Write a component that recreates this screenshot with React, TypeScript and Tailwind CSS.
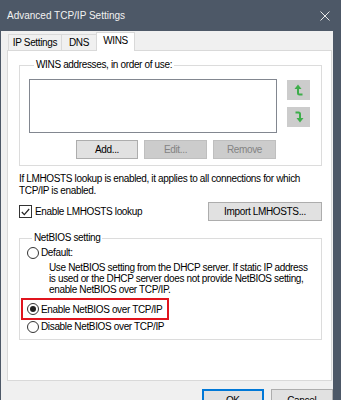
import React from "react";

const font = { fontFamily: '"Liberation Sans", Arial, sans-serif' };

const Radio = ({ checked }: { checked?: boolean }) => (
  <span className="w-[12px] h-[12px] rounded-full border border-[#333] bg-white flex items-center justify-center shrink-0">
    {checked && <span className="w-[6px] h-[6px] rounded-full bg-[#222]" />}
  </span>
);

const WinButton = ({
  children,
  disabled,
  className = "",
}: {
  children: React.ReactNode;
  disabled?: boolean;
  className?: string;
}) => (
  <div
    className={
      "h-[19px] flex items-center justify-center border text-[10px] tracking-[-0.35px] " +
      (disabled
        ? "bg-[#cccccc] border-[#bfbfbf] text-[#838383] "
        : "bg-[#e1e1e1] border-[#adadad] text-black ") +
      className
    }
  >
    {children}
  </div>
);

const UpIcon = () => (
  <svg width="10" height="12" viewBox="0 0 10 12">
    <polygon points="0.5,5 4,0.5 7.5,5" fill="#3dae4a" />
    <path d="M4 4.5 V9 Q4 10.5 5.5 10.5 H8.5" stroke="#3dae4a" strokeWidth="2" fill="none" />
  </svg>
);

const DownIcon = () => (
  <svg width="10" height="12" viewBox="0 0 10 12">
    <path d="M1.5 1.5 H4.5 Q6 1.5 6 3 V7.5" stroke="#3dae4a" strokeWidth="2" fill="none" />
    <polygon points="2.5,7 6,11.5 9.5,7" fill="#3dae4a" />
  </svg>
);

export default function App() {
  return (
    <div className="w-[341px] h-[400px] overflow-hidden bg-[#4d5867] flex flex-col whitespace-nowrap" style={font}>
      {/* title bar */}
      <div className="h-[31px] shrink-0 flex items-center justify-between pl-[7px] pr-[11px] text-[10px] text-[#f2f2f2]">
        <span>Advanced TCP/IP Settings</span>
        <svg width="10" height="10" viewBox="0 0 10 10">
          <path d="M0.5 0.5 L9.5 9.5 M9.5 0.5 L0.5 9.5" stroke="#e8e8e8" strokeWidth="1" />
        </svg>
      </div>

      <div className="ml-[1px] w-[332px] flex-1 bg-[#f0f0f0] flex flex-col text-[10px] tracking-[-0.35px] text-black">
        {/* tabs */}
        <div className="mt-[1px] ml-[7px] h-[18px] flex items-end">
          <div className="h-[16px] w-[54px] flex items-center justify-center border border-b-0 border-[#d9d9d9] bg-[#f0f0f0]">
            IP Settings
          </div>
          <div className="-ml-px h-[16px] w-[36px] flex items-center justify-center border border-b-0 border-[#d9d9d9] bg-[#f0f0f0]">
            DNS
          </div>
          <div className="-ml-px h-[19px] -mb-px relative z-10 w-[39px] pb-[3px] flex items-center justify-center border border-b-0 border-[#d9d9d9] bg-white">
            WINS
          </div>
        </div>

        {/* tab panel */}
        <div className="ml-[6px] w-[325px] h-[331px] border border-[#d9d9d9] bg-white px-[11px]">
          <fieldset className="mt-[8px] w-[303px] border border-[#dcdcdc] pl-[9px] pb-[6px]">
            <legend className="ml-[5px] px-[2px] leading-[12px]">WINS addresses, in order of use:</legend>
            <div className="mt-[8px] flex">
              <div className="w-[248px] h-[54px] border border-[#828790] bg-white" />
              <div className="ml-[10px] mt-[1px] flex flex-col gap-[7px]">
                <div className="w-[23px] h-[20px] bg-[#cccccc] flex items-center justify-center">
                  <UpIcon />
                </div>
                <div className="w-[23px] h-[20px] bg-[#cccccc] flex items-center justify-center">
                  <DownIcon />
                </div>
              </div>
            </div>
            <div className="mt-[7px] ml-[47px] flex gap-[6px]">
              <WinButton className="w-[62px]">Add...</WinButton>
              <WinButton disabled className="w-[63px]">
                Edit...
              </WinButton>
              <WinButton disabled className="w-[63px]">
                Remove
              </WinButton>
            </div>
          </fieldset>

          <p className="mt-[7px] leading-[12px]">
            If LMHOSTS lookup is enabled, it applies to all connections for which
            <br />
            TCP/IP is enabled.
          </p>

          <div className="mt-[5px] w-[303px] flex items-center justify-between">
            <div className="flex items-center gap-[3px]">
              <span className="w-[13px] h-[13px] border border-[#333] bg-white flex items-center justify-center">
                <svg width="9" height="8" viewBox="0 0 9 8">
                  <path d="M0.8 4 L3.3 6.6 L8.2 1" stroke="#222" strokeWidth="1.2" fill="none" />
                </svg>
              </span>
              <span>Enable LMHOSTS lookup</span>
            </div>
            <WinButton className="w-[114px]">Import LMHOSTS...</WinButton>
          </div>

          <fieldset className="mt-[11px] w-[303px] border border-[#dcdcdc] pl-[7px] pb-[6px]">
            <legend className="ml-[5px] px-[2px] leading-[12px]">NetBIOS setting</legend>
            <div className="mt-[3px] flex items-center gap-[2px] leading-[12px]">
              <Radio />
              <span>Default:</span>
            </div>
            <p className="mt-[3px] ml-[22px] leading-[11px]">
              Use NetBIOS setting from the DHCP server. If static IP address
              <br />
              is used or the DHCP server does not provide NetBIOS setting,
              <br />
              enable NetBIOS over TCP/IP.
            </p>
            <div className="mt-[3px] -ml-[6px] w-[148px] h-[22px] border-2 border-[#e0141e] pl-[4px] flex items-center gap-[2px]">
              <Radio checked />
              <span>Enable NetBIOS over TCP/IP</span>
            </div>
            <div className="mt-[1px] flex items-center gap-[2px] leading-[12px]">
              <Radio />
              <span>Disable NetBIOS over TCP/IP</span>
            </div>
          </fieldset>
        </div>

        {/* dialog buttons */}
        <div className="mt-[8px] ml-[201px] flex gap-[7px]">
          <div className="w-[62px] h-[22px] border-2 border-[#0078d7] bg-[#e1e1e1] flex items-center justify-center">
            OK
          </div>
          <div className="w-[63px] h-[22px] border border-[#adadad] bg-[#e1e1e1] flex items-center justify-center">
            Cancel
          </div>
        </div>
      </div>
    </div>
  );
}
